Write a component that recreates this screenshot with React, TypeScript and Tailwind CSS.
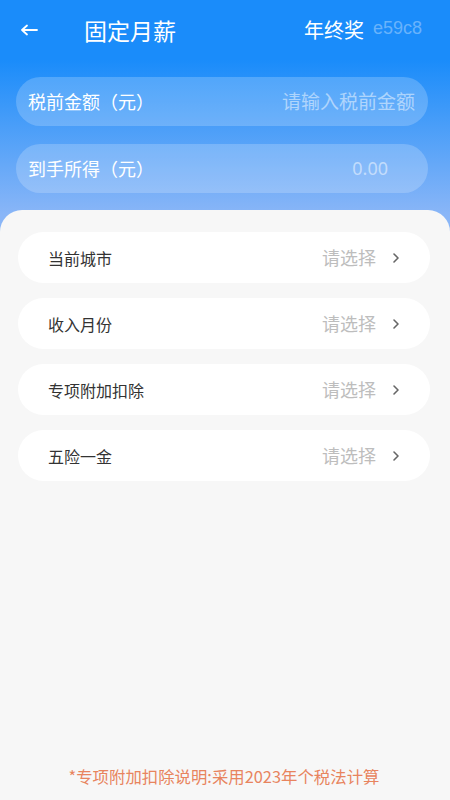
const rows = ["当前城市", "收入月份", "专项附加扣除", "五险一金"];

function Chevron() {
  return (
    <svg width="8" height="12" viewBox="0 0 8 12" fill="none">
      <path d="M2 2l4 4-4 4" stroke="#666" strokeWidth="1.6" strokeLinecap="round" strokeLinejoin="round" />
    </svg>
  );
}

export default function App() {
  return (
    <div
      className="w-[450px] h-[800px] flex flex-col bg-[linear-gradient(180deg,#1a8cfa_0px,#1a8cfa_60px,#8ab6f7_215px)]"
      style={{ fontFamily: '"Noto Sans CJK SC", "Noto Sans", sans-serif' }}
    >
      {/* header */}
      <header className="h-[60px] flex items-center pl-[20px] pr-[28px] text-white">
        <svg width="18" height="12" viewBox="0 0 18 12" fill="none" className="shrink-0">
          <path d="M17 6H2M7 1.5L2 6l5 4.5" stroke="white" strokeWidth="1.8" strokeLinecap="round" strokeLinejoin="round" />
        </svg>
        <span className="ml-[46px] text-[23px] leading-none">固定月薪</span>
        <span className="ml-auto text-[20px] leading-none">年终奖</span>
        <span
          className="ml-[9px] text-[18px] leading-none text-white/35 -mt-[4px]"
          style={{ fontFamily: '"Liberation Sans", Arial, sans-serif' }}
        >
          e59c8
        </span>
      </header>

      {/* inputs */}
      <div className="mt-[17px] px-[16px] pr-[22px] flex flex-col gap-[18px]">
        <div className="h-[49px] rounded-full bg-white/20 flex items-center pl-[12px] pr-[13px] text-white">
          <span className="text-[18px]">税前金额（元）</span>
          <span className="ml-auto text-[19px] text-white/50">请输入税前金额</span>
        </div>
        <div className="h-[49px] rounded-full bg-white/20 flex items-center pl-[12px] pr-[40px] text-white">
          <span className="text-[18px]">到手所得（元）</span>
          <span className="ml-auto text-[18px] text-white/50" style={{ fontFamily: '"Noto Sans", sans-serif' }}>
            0.00
          </span>
        </div>
      </div>

      {/* options panel */}
      <div className="mt-[17px] flex-1 rounded-t-[22px] bg-[#f7f7f7] pt-[22px] pl-[18px] pr-[20px] flex flex-col">
        <div className="flex flex-col gap-[15px]">
          {rows.map((r) => (
            <div key={r} className="h-[51px] rounded-full bg-white flex items-center pl-[30px] pr-[30px]">
              <span className="text-[16px] text-[#333]">{r}</span>
              <span className="ml-auto text-[18px] text-[#bdbdbd]">请选择</span>
              <span className="ml-[16px] flex items-center">
                <Chevron />
              </span>
            </div>
          ))}
        </div>
        <p className="mt-auto mb-[11px] text-center text-[16.4px] text-[#e8845e]">
          *专项附加扣除说明:采用2023年个税法计算
        </p>
      </div>
    </div>
  );
}
